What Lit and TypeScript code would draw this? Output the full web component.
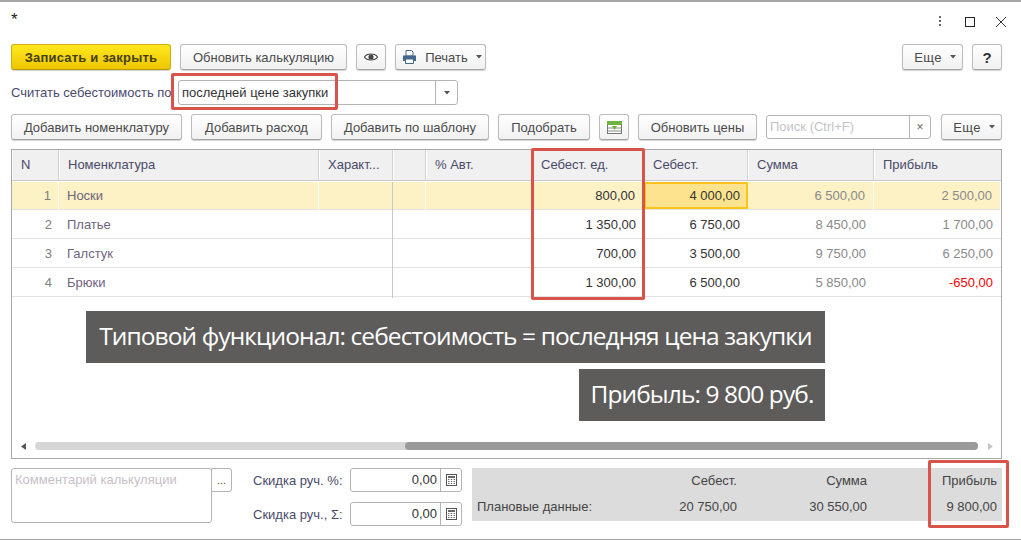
import { LitElement, html, css, svg } from 'lit';
import { customElement } from 'lit/decorators.js';

const COLUMNS = ['N', 'Номенклатура', 'Характ...', '', '% Авт.', 'Себест. ед.', 'Себест.', 'Сумма', 'Прибыль'];

const ROWS = [
  { n: 1, name: 'Носки', unit: '800,00', cost: '4 000,00', sum: '6 500,00', profit: '2 500,00' },
  { n: 2, name: 'Платье', unit: '1 350,00', cost: '6 750,00', sum: '8 450,00', profit: '1 700,00' },
  { n: 3, name: 'Галстук', unit: '700,00', cost: '3 500,00', sum: '9 750,00', profit: '6 250,00' },
  { n: 4, name: 'Брюки', unit: '1 300,00', cost: '6 500,00', sum: '5 850,00', profit: '-650,00' },
];

const FRAMES = [
  { x: 171, y: 73, w: 167, h: 37 },
  { x: 531, y: 148, w: 114, h: 152 },
  { x: 928, y: 460, w: 81, h: 68 },
];

const caret = svg`<svg class="caret" width="6" height="4" viewBox="0 0 6 4"><path d="M0 0h6L3 3.500z" fill="#555"/></svg>`;

const calcIcon = html`<svg width="11" height="12" viewBox="0 0 11 12">
  <rect x=".5" y=".5" width="10" height="11" fill="#fff" stroke="#555"/>
  <rect x="2" y="2" width="7" height="2" fill="#666"/>
  <path d="M2 5.5h1.4M4.8 5.5h1.4M7.6 5.5H9M2 7.5h1.4M4.8 7.5h1.4M7.6 7.5H9M2 9.5h1.4M4.8 9.5h1.4M7.6 9.5H9" stroke="#666"/>
</svg>`;

@customElement('app-root')
export class AppRoot extends LitElement {
  static styles = css`
    :host {
      display: block;
      position: relative;
      width: 1021px;
      height: 540px;
      box-sizing: border-box;
      overflow: hidden;
      padding: 0 19px 0 11px;
      background: #fff;
      border-top: 2px solid #a6a6a6;
      border-bottom: 1px solid #a6a6a6;
      font: 13px 'Liberation Sans', Arial, sans-serif;
      color: #4a4a4a;
    }
    .title {
      height: 42px;
      position: relative;
      font-size: 17px;
      line-height: 36px;
      color: #222;
    }
    .win {
      position: absolute;
      right: -5px;
      top: 13px;
      display: flex;
      align-items: center;
      gap: 20px;
    }
    .win .dots-icon { margin-right: 3px; }
    .row {
      display: flex;
      align-items: center;
      gap: 9px;
    }
    .row1 { height: 26px; }
    .row2 { height: 25px; margin-top: 10px; gap: 0; }
    .row3 { height: 26px; margin-top: 9px; }
    .spacer { flex: 1; }
    .btn {
      box-sizing: border-box;
      height: 26px;
      display: flex;
      align-items: center;
      justify-content: center;
      gap: 7px;
      border: 1px solid #bcbcbc;
      border-bottom-color: #a4a4a4;
      border-radius: 3px;
      background: linear-gradient(#ffffff, #f1f1f1);
      box-shadow: 0 1px 1px rgba(0, 0, 0, 0.18);
      white-space: nowrap;
    }
    .primary {
      background: linear-gradient(#ffe81f, #eec600);
      border-color: #cfae10;
      border-bottom-color: #b89a00;
      font-weight: bold;
      letter-spacing: 0.2px;
      color: #45400f;
    }
    .print { padding-left: 3px; gap: 8px; }
    .more { padding-left: 5px; gap: 8px; letter-spacing: 0.4px; }
    .help { font-size: 15px; font-weight: bold; color: #333; }
    .label { width: 167px; color: #4a4a6e; white-space: nowrap; overflow: hidden; }
    .field {
      box-sizing: border-box;
      display: flex;
      align-items: stretch;
      border: 1px solid #b4b4b4;
      border-radius: 3px;
      background: #fff;
    }
    .combo { width: 280px; height: 25px; }
    .combo .value { flex: 1; padding-left: 3px; line-height: 23px; color: #333; }
    .side {
      border-left: 1px solid #b4b4b4;
      display: flex;
      align-items: center;
      justify-content: center;
    }
    .combo .side { width: 21px; }
    .search { width: 165px; height: 24px; }
    .search .value { flex: 1; padding-left: 3px; line-height: 22px; color: #c4c4c4; }
    .search .side { width: 20px; color: #666; font-size: 12px; }

    .table {
      box-sizing: border-box;
      height: 310px;
      margin-top: 9px;
      display: flex;
      flex-direction: column;
      border: 1px solid #a8a8a8;
    }
    .grid {
      display: grid;
      grid-template-columns: 47px 260px 74px 33px 106px 112px 104px 126px 1fr;
    }
    .head {
      height: 31px;
      background: #f0f0f0;
      border-bottom: 1px solid #c8c8c8;
      box-sizing: border-box;
      color: #4a4a6a;
    }
    .head div {
      padding-left: 8px;
      line-height: 30px;
      border-right: 1px solid #d2d2d2;
      border-left: 1px solid #fff;
      white-space: nowrap;
      overflow: hidden;
    }
    .head div:last-child { border-right: 0; }
    .body {
      height: 29px;
      box-sizing: border-box;
      border-bottom: 1px solid #e2e2e2;
    }
    .body div {
      line-height: 30px;
      box-sizing: border-box;
    }
    .num { text-align: right; padding-right: 8px; color: #333; }
    .idx { text-align: right; padding-right: 7px; color: #808080; }
    .name { padding-left: 8px; color: #6f6480; }
    .muted { color: #8a8a8a; }
    .neg { color: #f00; }
    .selected { background: #fdf1c6; border-top: 1px solid #fff; }
    .selected div { line-height: 28px; border-right: 1px solid #fff; }
    .selected .current {
      background: #fee38e;
      border: 2px solid #fcc41c;
      padding-right: 6px;
      line-height: 24px;
      height: 27px;
    }
    .body .sep { border-right: 1px solid #c8c8c8; }
    .scroll {
      margin-top: auto;
      height: 16px;
      display: flex;
      align-items: center;
      gap: 10px;
      padding: 0 8px 4px 9px;
    }
    .scroll .larr { margin-right: -1px; }
    .track {
      flex: 1;
      height: 8px;
      border-radius: 4px;
      background: #d6d6d6;
      display: flex;
      justify-content: flex-end;
    }
    .thumb { width: 573px; height: 8px; border-radius: 4px; background: #9a9a9a; }

    .bottom {
      margin-top: 9px;
      display: flex;
      align-items: flex-start;
    }
    .comment { width: 201px; height: 55px; padding: 3px; box-sizing: border-box; color: #c8c0c8; line-height: 16px; }
    .dots { width: 21px; height: 24px; margin-left: -1px; font-size: 11px; line-height: 22px; text-align: center; color: #555; }
    .dots.field { display: block; border-radius: 0 3px 3px 0; }
    .discounts {
      margin-left: 21px;
      display: grid;
      grid-template-columns: 97px 112px;
      row-gap: 10px;
      align-items: center;
    }
    .discounts span { color: #4a4a6a; white-space: nowrap; }
    .amount { height: 24px; }
    .amount .value { flex: 1; text-align: right; padding-right: 3px; line-height: 22px; color: #333; }
    .amount .side { width: 20px; }
    .totals {
      margin-left: 10px;
      flex: 1;
      height: 53px;
      box-sizing: border-box;
      padding: 0 5px;
      background: #dcdcdc;
      display: grid;
      grid-template-columns: 1fr 130px 130px 130px;
      grid-auto-rows: 26px;
      line-height: 26px;
      color: #444;
    }
    .totals .r { text-align: right; }

    .note {
      position: absolute;
      box-sizing: border-box;
      height: 52px;
      right: 196px;
      background: #5d5c5a;
      color: #fff;
      font: 24.5px/50px 'Open Sans', sans-serif;
      letter-spacing: -0.9px;
      text-align: center;
      white-space: nowrap;
    }
    .note.a { top: 309px; width: 739px; }
    .note.b { top: 367px; width: 246px; }
    .frame {
      position: absolute;
      box-sizing: border-box;
      border: 3px solid #d8544a;
      border-radius: 2px;
      margin-top: -2px;
    }
  `;

  private _cell(value: string, cls: string) {
    return html`<div class=${cls}>${value}</div>`;
  }

  render() {
    return html`
      <div class="title">
        *
        <div class="win">
          <svg class="dots-icon" width="4" height="13" viewBox="0 0 4 13"><path d="M1 1h2v2H1zM1 5h2v2H1zM1 9h2v2H1z" fill="#666"/></svg>
          <svg width="10" height="10" viewBox="0 0 10 10"><rect x=".5" y=".5" width="9" height="9" fill="none" stroke="#222"/></svg>
          <svg width="12" height="12" viewBox="0 0 12 12"><path d="M1 1l10 10M11 1L1 11" stroke="#333" fill="none"/></svg>
        </div>
      </div>

      <div class="row row1">
        <div class="btn primary" style="width:160px">Записать и закрыть</div>
        <div class="btn" style="width:167px">Обновить калькуляцию</div>
        <div class="btn" style="width:30px">
          <svg width="14" height="10" viewBox="0 0 14 10">
            <path d="M0.5 5C3 1 11 1 13.5 5C11 9 3 9 0.5 5z" fill="#fff" stroke="#444" stroke-width="1.2"/>
            <circle cx="7" cy="5" r="2.6" fill="#444"/>
          </svg>
        </div>
        <div class="btn print" style="width:91px">
          <svg width="15" height="14" viewBox="0 0 15 14">
            <path d="M4 .5h5.5L11 2v4H4z" fill="#fff" stroke="#44688c"/>
            <path d="M1 5.5h13v5.500h-2V9H3v2H1z" fill="#44688c"/>
            <path d="M3.500 9h8v4.500h-8z" fill="#fff" stroke="#44688c"/>
          </svg>
          Печать ${caret}
        </div>
        <div class="spacer"></div>
        <div class="btn more" style="width:61px">Еще ${caret}</div>
        <div class="btn help" style="width:30px">?</div>
      </div>

      <div class="row row2">
        <div class="label">Считать себестоимость по:</div>
        <div class="field combo">
          <div class="value">последней цене закупки</div>
          <div class="side">${caret}</div>
        </div>
      </div>

      <div class="row row3">
        <div class="btn" style="width:171px">Добавить номенклатуру</div>
        <div class="btn" style="width:131px">Добавить расход</div>
        <div class="btn" style="width:158px">Добавить по шаблону</div>
        <div class="btn" style="width:92px">Подобрать</div>
        <div class="btn" style="width:30px">
          <svg width="15" height="13" viewBox="0 0 15 13">
            <rect x=".5" y=".5" width="14" height="12" fill="#fff" stroke="#777"/>
            <rect x="0" y="0" width="15" height="4" fill="#6cb33f"/>
            <path d="M1 7h13M1 10h13" stroke="#888"/>
            <path d="M5 5h5L7.500 9z" fill="#6cb33f"/>
          </svg>
        </div>
        <div class="btn" style="width:119px">Обновить цены</div>
        <div class="field search">
          <div class="value">Поиск (Ctrl+F)</div>
          <div class="side">×</div>
        </div>
        <div class="btn more" style="width:61px;margin-left:1px">Еще ${caret}</div>
      </div>

      <div class="table">
        <div class="grid head">${COLUMNS.map((c) => html`<div>${c}</div>`)}</div>
        ${ROWS.map(
          (r, i) => html`
            <div class="grid body ${i === 0 ? 'selected' : ''}">
              ${this._cell(String(r.n), 'idx')}
              ${this._cell(r.name, 'name')}
              <div class="sep"></div>
              <div></div>
              <div></div>
              ${this._cell(r.unit, 'num')}
              ${this._cell(r.cost, i === 0 ? 'num current' : 'num')}
              ${this._cell(r.sum, 'num muted')}
              ${this._cell(r.profit, r.profit.startsWith('-') ? 'num neg' : 'num muted')}
            </div>
          `,
        )}
        <div class="scroll">
          <svg class="larr" width="5" height="7" viewBox="0 0 5 7"><path d="M5 0v7L0 3.500z" fill="#555"/></svg>
          <div class="track"><div class="thumb"></div></div>
          <svg width="5" height="7" viewBox="0 0 5 7"><path d="M0 0v7l5-3.500z" fill="#c4c4c4"/></svg>
        </div>
      </div>

      <div class="bottom">
        <div class="field comment">Комментарий калькуляции</div>
        <div class="field dots">...</div>
        <div class="discounts">
          <span>Скидка руч. %:</span>
          <div class="field amount"><div class="value">0,00</div><div class="side">${calcIcon}</div></div>
          <span>Скидка руч., Σ:</span>
          <div class="field amount"><div class="value">0,00</div><div class="side">${calcIcon}</div></div>
        </div>
        <div class="totals">
          <div></div>
          <div class="r">Себест.</div>
          <div class="r">Сумма</div>
          <div class="r">Прибыль</div>
          <div>Плановые данные:</div>
          <div class="r">20 750,00</div>
          <div class="r">30 550,00</div>
          <div class="r">9 800,00</div>
        </div>
      </div>

      <div class="note a">Типовой функционал: себестоимость = последняя цена закупки</div>
      <div class="note b">Прибыль: 9 800 руб.</div>
      ${FRAMES.map(
        (f) => html`<div
          class="frame"
          style="left:${f.x}px;top:${f.y}px;width:${f.w}px;height:${f.h}px"
        ></div>`,
      )}
    `;
  }
}
